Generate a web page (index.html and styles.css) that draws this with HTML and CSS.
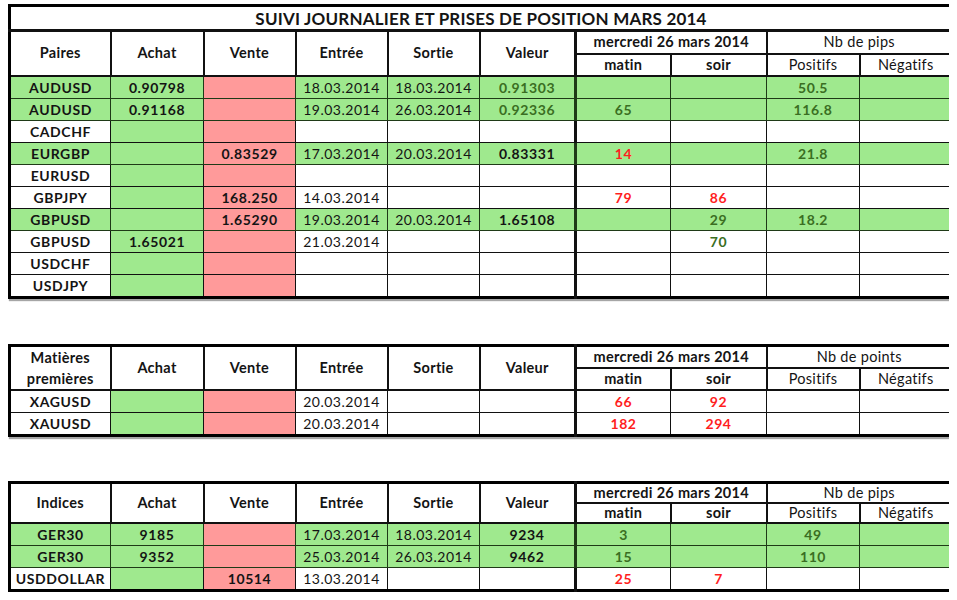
FILE: index.html
```html
<!DOCTYPE html>
<html lang="fr">
<head>
<meta charset="utf-8">
<title>Suivi journalier</title>
<link rel="stylesheet" href="styles.css">
</head>
<body>
<table class="sheet first">
  <colgroup>
    <col class="c1"><col class="c2"><col class="c3"><col class="c4"><col class="c5"><col class="c6"><col class="c7"><col class="c8"><col class="c9"><col class="c10">
  </colgroup>
  <tr class="title-row"><td colspan="10" class="title">SUIVI JOURNALIER ET PRISES DE POSITION MARS 2014</td></tr>
  <tr class="h1">
    <th rowspan="2">Paires</th><th rowspan="2">Achat</th><th rowspan="2">Vente</th><th rowspan="2">Entrée</th><th rowspan="2">Sortie</th><th rowspan="2" class="val">Valeur</th>
    <th colspan="2">mercredi 26 mars 2014</th><th colspan="2" class="reg">Nb de pips</th>
  </tr>
  <tr class="h2"><th>matin</th><th>soir</th><th class="reg">Positifs</th><th class="reg">Négatifs</th></tr>
  <tr class="row g"><td class="b">AUDUSD</td><td class="b">0.90798</td><td class="p"></td><td>18.03.2014</td><td>18.03.2014</td><td class="b gt val">0.91303</td><td></td><td></td><td class="b gt">50.5</td><td></td></tr>
  <tr class="row g"><td class="b">AUDUSD</td><td class="b">0.91168</td><td class="p"></td><td>19.03.2014</td><td>26.03.2014</td><td class="b gt val">0.92336</td><td class="b gt">65</td><td></td><td class="b gt">116.8</td><td></td></tr>
  <tr class="row"><td class="b">CADCHF</td><td class="gc"></td><td class="p"></td><td></td><td></td><td class="val"></td><td></td><td></td><td></td><td></td></tr>
  <tr class="row g"><td class="b">EURGBP</td><td></td><td class="p b">0.83529</td><td>17.03.2014</td><td>20.03.2014</td><td class="b val">0.83331</td><td class="b rt">14</td><td></td><td class="b gt">21.8</td><td></td></tr>
  <tr class="row"><td class="b">EURUSD</td><td class="gc"></td><td class="p"></td><td></td><td></td><td class="val"></td><td></td><td></td><td></td><td></td></tr>
  <tr class="row"><td class="b">GBPJPY</td><td class="gc"></td><td class="p b">168.250</td><td>14.03.2014</td><td></td><td class="val"></td><td class="b rt">79</td><td class="b rt">86</td><td></td><td></td></tr>
  <tr class="row g"><td class="b">GBPUSD</td><td></td><td class="p b">1.65290</td><td>19.03.2014</td><td>20.03.2014</td><td class="b val">1.65108</td><td></td><td class="b gt">29</td><td class="b gt">18.2</td><td></td></tr>
  <tr class="row"><td class="b">GBPUSD</td><td class="gc b">1.65021</td><td class="p"></td><td>21.03.2014</td><td></td><td class="val"></td><td></td><td class="b gt">70</td><td></td><td></td></tr>
  <tr class="row"><td class="b">USDCHF</td><td class="gc"></td><td class="p"></td><td></td><td></td><td class="val"></td><td></td><td></td><td></td><td></td></tr>
  <tr class="row"><td class="b">USDJPY</td><td class="gc"></td><td class="p"></td><td></td><td></td><td class="val"></td><td></td><td></td><td></td><td></td></tr>
</table>

<table class="sheet second">
  <colgroup>
    <col class="c1"><col class="c2"><col class="c3"><col class="c4"><col class="c5"><col class="c6"><col class="c7"><col class="c8"><col class="c9"><col class="c10">
  </colgroup>
  <tr class="h1 t2">
    <th rowspan="2" class="two">Matières<br>premières</th><th rowspan="2">Achat</th><th rowspan="2">Vente</th><th rowspan="2">Entrée</th><th rowspan="2">Sortie</th><th rowspan="2" class="val">Valeur</th>
    <th colspan="2">mercredi 26 mars 2014</th><th colspan="2" class="reg">Nb de points</th>
  </tr>
  <tr class="h2 t2"><th>matin</th><th>soir</th><th class="reg">Positifs</th><th class="reg">Négatifs</th></tr>
  <tr class="row"><td class="b">XAGUSD</td><td class="gc"></td><td class="p"></td><td>20.03.2014</td><td></td><td class="val"></td><td class="b rt">66</td><td class="b rt">92</td><td></td><td></td></tr>
  <tr class="row"><td class="b">XAUUSD</td><td class="gc"></td><td class="p"></td><td>20.03.2014</td><td></td><td class="val"></td><td class="b rt">182</td><td class="b rt">294</td><td></td><td></td></tr>
</table>

<table class="sheet third">
  <colgroup>
    <col class="c1"><col class="c2"><col class="c3"><col class="c4"><col class="c5"><col class="c6"><col class="c7"><col class="c8"><col class="c9"><col class="c10">
  </colgroup>
  <tr class="h1 t3">
    <th rowspan="2">Indices</th><th rowspan="2">Achat</th><th rowspan="2">Vente</th><th rowspan="2">Entrée</th><th rowspan="2">Sortie</th><th rowspan="2" class="val">Valeur</th>
    <th colspan="2">mercredi 26 mars 2014</th><th colspan="2" class="reg">Nb de pips</th>
  </tr>
  <tr class="h2 t3"><th>matin</th><th>soir</th><th class="reg">Positifs</th><th class="reg">Négatifs</th></tr>
  <tr class="row g"><td class="b">GER30</td><td class="b">9185</td><td class="p"></td><td>17.03.2014</td><td>18.03.2014</td><td class="b val">9234</td><td class="b gt">3</td><td></td><td class="b gt">49</td><td></td></tr>
  <tr class="row g"><td class="b">GER30</td><td class="b">9352</td><td class="p"></td><td>25.03.2014</td><td>26.03.2014</td><td class="b val">9462</td><td class="b gt">15</td><td></td><td class="b gt">110</td><td></td></tr>
  <tr class="row"><td class="b">USDDOLLAR</td><td class="gc"></td><td class="p b">10514</td><td>13.03.2014</td><td></td><td class="val"></td><td class="b rt">25</td><td class="b rt">7</td><td></td><td></td></tr>
</table>
</body>
</html>
```

FILE: styles.css
```css
html, body {
  background: #ffffff;
}
body {
  margin: 4px 8px;
  font-family: Lato, "Open Sans", "Liberation Sans", sans-serif;
  color: #141414;
}
.sheet {
  border-collapse: collapse;
  table-layout: fixed;
  width: 943px;
  border: 3px solid #000;
  box-shadow: 1px 2px 1px rgba(0, 0, 0, 0.35);
}
.first { margin-bottom: 45px; }
.second { margin-bottom: 44px; }
.c1 { width: 101px; }
.c2 { width: 93px; }
.c3 { width: 92px; }
.c4 { width: 92px; }
.c5 { width: 92px; }
.c6 { width: 96px; }
.c7 { width: 95px; }
.c8 { width: 96px; }
.c9 { width: 93px; }
.c10 { width: 93px; }

.sheet td, .sheet th {
  border: 1px solid #111;
  padding: 0 2px;
  text-align: center;
  vertical-align: middle;
  font-size: 14px;
  letter-spacing: 0.5px;
  font-weight: 400;
  white-space: nowrap;
  overflow: hidden;
  line-height: 1;
}
.sheet th {
  border-width: 2px;
  font-weight: 700;
  font-size: 14.5px;
  letter-spacing: 0.3px;
}
.sheet th.reg {
  font-weight: 400;
}
.sheet th.two {
  line-height: 21px;
}
.title-row td.title {
  height: 22px;
  font-size: 17px;
  font-weight: 700;
  letter-spacing: 0.2px;
  border-bottom-width: 3px;
}
.h1 th { height: 21px; }
.h2 th { height: 20px; }
.h1.t2 th { height: 19px; }
.h2.t2 th { height: 19px; }
.h1.t3 th { height: 18px; }
.h2.t3 th { height: 18px; }
.sheet th.val, .sheet td.val { border-right-width: 3px; }
.row td { height: 21px; }

.sheet .g td { background: #9fe98e; border-color: #1f3a17; }
.sheet td.gc { background: #9fe98e; }
.sheet td.p { background: #ff9a9a; }
.sheet td.b { font-weight: 700; letter-spacing: 0.6px; }
.sheet td.gt { color: #3a6e22; }
.sheet td.rt { color: #ff1e1e; }
```
